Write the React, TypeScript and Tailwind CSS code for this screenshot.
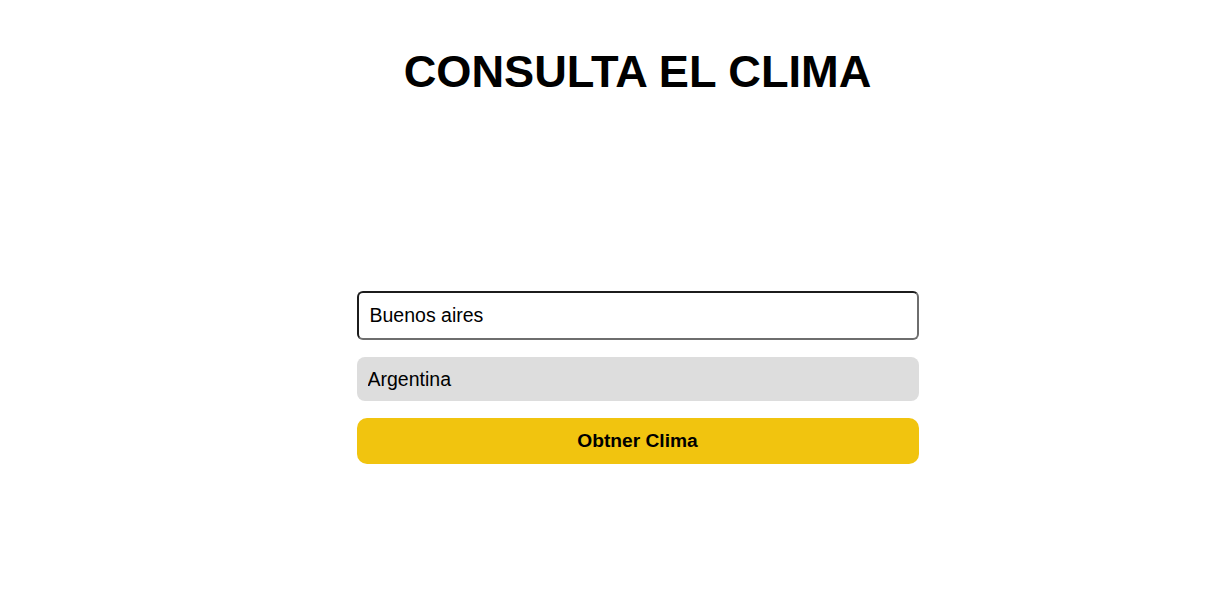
import React from "react";

export default function App() {
  return (
    <div className="min-h-[602px] w-full bg-white font-['Liberation_Sans',Arial,sans-serif] text-black">
      <div className="flex flex-col items-center pl-[68px]">
        <h1 className="mt-[44px] text-[45.2px] font-bold leading-[56px]">CONSULTA EL CLIMA</h1>

        <form className="mt-[191px] flex w-[562px] flex-col" onSubmit={(e) => e.preventDefault()}>
          <input
            type="text"
            defaultValue="Buenos aires"
            className="h-[49px] w-full rounded-[6px] border-2 border-t-[#1c1c1c] border-l-[#1c1c1c] border-r-[#6e6e6e] border-b-[#6e6e6e] bg-white px-[11px] text-[19.5px] outline-none"
          />
          <input
            type="text"
            defaultValue="Argentina"
            className="mt-[17px] h-[44px] w-full rounded-[8px] bg-[#dddddd] px-[11px] text-[19.5px] outline-none"
          />
          <button
            type="submit"
            className="mt-[17px] h-[46px] w-full rounded-[10px] bg-[#f1c40f] text-[19.2px] font-bold"
          >
            Obtner Clima
          </button>
        </form>
      </div>
    </div>
  );
}
